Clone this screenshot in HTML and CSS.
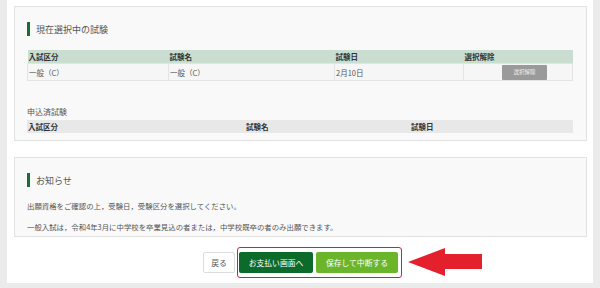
FILE: index.html
```html
<!DOCTYPE html>
<html lang="ja">
<head>
  <meta charset="UTF-8" />
  <meta name="viewport" content="width=device-width, initial-scale=1" />
  <title>出願内容の確認</title>
  <link rel="stylesheet" href="styles.css">
</head>
<body>

<div class="page">
  <section class="card">
    <h2 class="card-title">現在選択中の試験</h2>
    <table class="exam-table current">
      <thead>
        <tr>
          <th class="col-kubun">入試区分</th>
          <th class="col-name">試験名</th>
          <th class="col-date">試験日</th>
          <th>選択解除</th>
        </tr>
      </thead>
      <tbody>
        <tr>
          <td>一般（C）</td>
          <td>一般（C）</td>
          <td>2月10日</td>
          <td class="cell-btn"><button class="btn-cancel">選択解除</button></td>
        </tr>
      </tbody>
    </table>

    <p class="sub-title">申込済試験</p>
    <table class="exam-table applied">
      <thead>
        <tr>
          <th class="col-a1">入試区分</th>
          <th class="col-a2">試験名</th>
          <th>試験日</th>
        </tr>
      </thead>
    </table>
  </section>

  <section class="card notice">
    <h2 class="card-title">お知らせ</h2>
    <p>出願資格をご確認の上，受験日，受験区分を選択してください。</p>
    <p>一般入試は，令和4年3月に中学校を卒業見込の者または，中学校既卒の者のみ出願できます。</p>
  </section>

  <div class="actions">
    <button class="btn btn-back">戻る</button>
    <div class="highlight">
      <button class="btn btn-pay">お支払い画面へ</button>
      <button class="btn btn-save">保存して中断する</button>
    </div>
    <svg class="arrow" width="76" height="30" viewBox="0 0 76 30">
      <polygon points="0,14 37,0 37,6 74,6 74,21 37,21 37,28" fill="#e3202b" />
    </svg>
  </div>
</div>

</body>
</html>
```

FILE: styles.css
```css
body {
  margin: 0;
  background: #ebebeb;
  font-family: "Noto Sans CJK JP", "Noto Sans", sans-serif;
  color: #444;
}
.page {
  width: 573px;
  margin-left: 7px;
  height: 277px;
  padding: 6px 6px 0 7px;
  background: white;
}
.card {
  background: #f9f9f9;
  border: 1px solid #e2e2e2;
  padding: 15px 13px 7px 12px;
}
.card-title {
  margin: 0;
  display: flex;
  align-items: center;
  height: 14px;
  font-size: 9px;
  font-weight: normal;
  color: #555;
}
.card-title::before {
  content: "";
  width: 3px;
  height: 14px;
  background: #1b6c36;
  margin-right: 6px;
}
.exam-table {
  width: 100%;
  border-collapse: collapse;
  font-size: 7.5px;
}
.exam-table th {
  text-align: left;
  font-weight: bold;
  color: #333;
  height: 13px;
  padding: 0 1px;
}
.exam-table td {
  height: 16px;
  padding: 0 1px;
  border: 1px solid #e4e4e4;
  color: #555;
}
.current {
  margin-top: 14px;
}
.current th {
  background: #c9ddd0;
}
.current tbody tr {
  background: #f6f6f6;
}
.col-kubun { width: 139px; }
.col-name { width: 164px; }
.col-date { width: 127px; }
.exam-table .cell-btn {
  padding-left: 38px;
}
.btn-cancel {
  display: block;
  width: 45px;
  height: 15px;
  border: none;
  border-radius: 1px;
  background: #9a9a9a;
  color: #f0f0f0;
  font-family: inherit;
  font-size: 5.5px;
  padding: 0;
}
.sub-title {
  margin: 25px 0 3px;
  font-size: 8px;
  color: #555;
}
.applied th {
  background: #e8e8e8;
}
.col-a1 { width: 216px; }
.col-a2 { width: 163px; }
.notice {
  margin-top: 16px;
  padding-bottom: 4px;
}
.notice p {
  margin: 14px 0 0;
  font-size: 7.4px;
  line-height: 10px;
  color: #555;
}
.notice p + p {
  margin-top: 11px;
}
.actions {
  position: relative;
  display: flex;
  justify-content: center;
  align-items: center;
  gap: 2px;
  margin-top: 10px;
  padding-left: 4px;
}
.highlight {
  display: flex;
  gap: 3px;
  padding: 4px 3px 4px 1px;
  border: 1px solid #d4222b;
  border-radius: 3px;
}
.btn {
  height: 21px;
  border-radius: 2px;
  font-family: inherit;
  font-size: 7.8px;
  padding: 0;
  cursor: pointer;
}
.btn-back {
  width: 32px;
  background: white;
  border: 1px solid #ddd;
  color: #555;
}
.btn-pay {
  width: 74px;
  background: #0c6a2b;
  border: none;
  color: white;
}
.btn-save {
  width: 82px;
  background: #6bb52b;
  border: none;
  color: white;
}
.arrow {
  position: absolute;
  left: 394px;
  top: 1px;
}
```
